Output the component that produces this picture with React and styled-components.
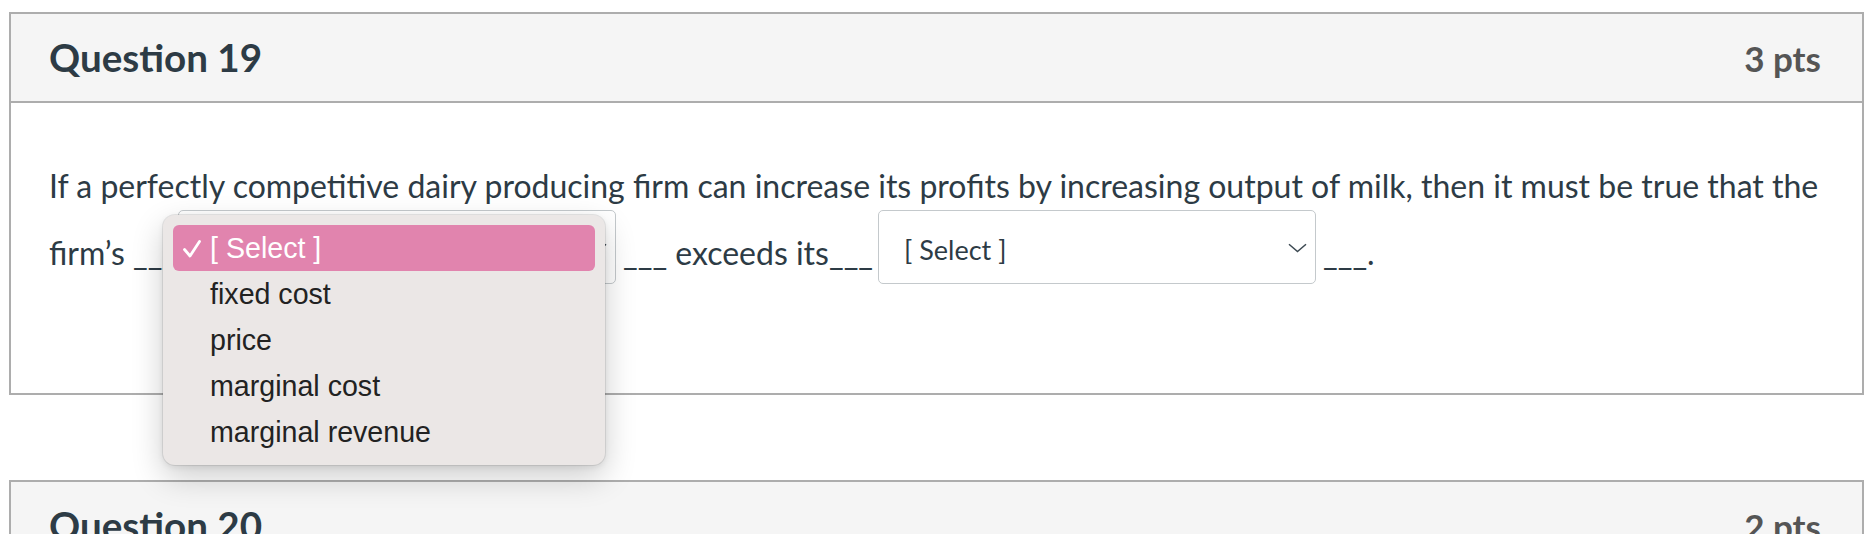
import React from 'react';
import styled, { createGlobalStyle } from 'styled-components';

const GlobalStyle = createGlobalStyle`
  html, body {
    margin: 0;
    background: #fff;
    overflow: hidden;
  }
  body {
    font-family: Lato, "Noto Sans", sans-serif;
    color: #2d3b45;
  }
`;

const Page = styled.div`
  box-sizing: border-box;
  height: 534px;
  overflow: hidden;
  padding: 12px 8px 0 9px;
`;

const Card = styled.div`
  border: 2px solid #adadad;
  & + & {
    margin-top: 85px;
  }
`;

const Header = styled.div`
  box-sizing: border-box;
  display: flex;
  align-items: baseline;
  justify-content: space-between;
  height: 89px;
  padding: 24px 41px 0 38px;
  background: #f5f5f5;
  border-bottom: 2px solid #adadad;
`;

const Title = styled.h2`
  margin: 0;
  font-size: 38.6px;
  font-weight: 700;
  line-height: 1;
  color: #2d3b45;
`;

const Points = styled.div`
  font-size: 35px;
  font-weight: 700;
  line-height: 1;
  color: #555;
`;

const Body = styled.div`
  box-sizing: border-box;
  height: 290px;
  padding: 59px 38px 0;
`;

const Text = styled.p`
  margin: 0;
  font-size: 32px;
  line-height: 1.5;
  color: #2d3b45;
`;

const SelectBox = styled.span`
  position: relative;
  box-sizing: border-box;
  display: inline-flex;
  align-items: center;
  justify-content: space-between;
  width: 438px;
  height: 74px;
  margin: 0 7px 0 ${(p) => p.$gap}px;
  padding: 5px 8px 0 25px;
  vertical-align: 5px;
  border: 1.5px solid #c4c9cc;
  border-radius: 5px;
  background: #fff;
  font-size: 27px;
  line-height: normal;
  color: #2d3b45;
`;

const Chevron = styled.svg`
  flex: none;
  margin-top: -4px;
`;

const Menu = styled.div`
  position: absolute;
  z-index: 10;
  left: -16px;
  top: 3.5px;
  box-sizing: border-box;
  width: 442px;
  padding: 10px;
  border-radius: 12px;
  background: #ebe7e6;
  box-shadow: 0 12px 32px rgba(0, 0, 0, 0.2), 0 2px 6px rgba(0, 0, 0, 0.08),
    0 0 0 1px rgba(0, 0, 0, 0.08);
  font-family: "Liberation Sans", Arial, sans-serif;
  font-size: 28.6px;
`;

const Option = styled.div`
  position: relative;
  display: flex;
  align-items: center;
  height: 46px;
  padding: 2px 0 0 37px;
  box-sizing: border-box;
  border-radius: 6px;
  background: ${(p) => (p.$selected ? '#e184ae' : 'transparent')};
  color: ${(p) => (p.$selected ? '#fff' : '#222')};
  white-space: nowrap;
`;

const Check = styled.svg`
  position: absolute;
  left: 10px;
  top: 15px;
`;

const ChevronIcon = () => (
  <Chevron width="19" height="10" viewBox="0 0 19 10">
    <path d="M1 1.2 L9.5 8.5 L18 1.2" fill="none" stroke="#3d4a53" strokeWidth="1.5" />
  </Chevron>
);

const options = ['[ Select ]', 'fixed cost', 'price', 'marginal cost', 'marginal revenue'];

const Select = ({ open, gap = 1 }) => (
  <SelectBox $gap={gap}>
    <span>[ Select ]</span>
    <ChevronIcon />
    {open && (
      <Menu>
        {options.map((o, i) => (
          <Option key={o} $selected={i === 0}>
            {i === 0 && (
              <Check width="18" height="18" viewBox="0 0 18 18">
                <path
                  d="M1.5 9.5 L7 16 L16.5 1.5"
                  fill="none"
                  stroke="#fff"
                  strokeWidth="2.8"
                  strokeLinecap="round"
                  strokeLinejoin="round"
                />
              </Check>
            )}
            {o}
          </Option>
        ))}
      </Menu>
    )}
  </SelectBox>
);

const App = () => {
  return (
    <>
      <GlobalStyle />
      <Page>
        <Card>
          <Header>
            <Title>Question 19</Title>
            <Points>3 pts</Points>
          </Header>
          <Body>
            <Text>
              If a perfectly competitive dairy producing firm can increase its profits by increasing
              output of milk, then it must be true that the
              <br />
              firm’s ___<Select open />
              ___ exceeds its___<Select gap={5} />
              ___.
            </Text>
          </Body>
        </Card>
        <Card>
          <Header>
            <Title>Question 20</Title>
            <Points>2 pts</Points>
          </Header>
          <Body />
        </Card>
      </Page>
    </>
  );
};

export default App;
